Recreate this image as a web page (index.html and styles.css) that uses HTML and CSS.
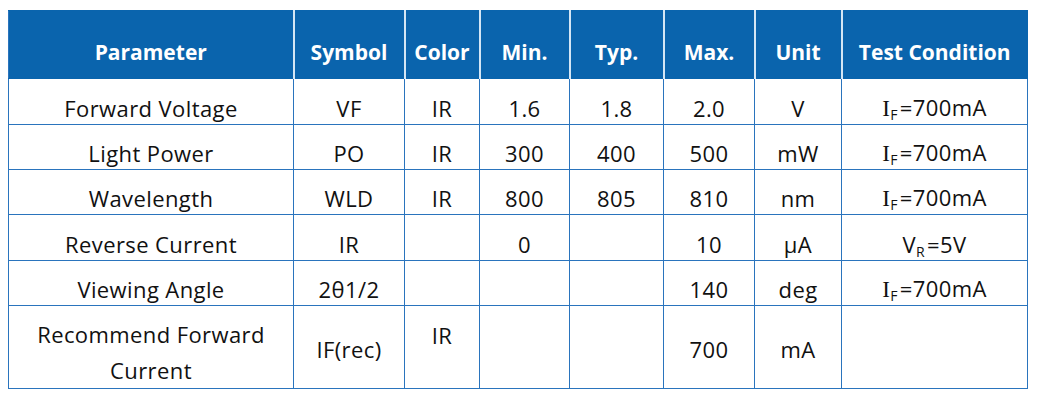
FILE: index.html
```html
<!DOCTYPE html>
<html>
<head>
<meta charset="utf-8">
<link rel="stylesheet" href="styles.css">
</head>
<body>
<table class="spec">
  <colgroup>
    <col class="c-param"><col class="c-sym"><col class="c-color"><col class="c-min"><col class="c-typ"><col class="c-max"><col class="c-unit"><col class="c-test">
  </colgroup>
  <thead>
    <tr class="head">
      <th>Parameter</th><th>Symbol</th><th>Color</th><th>Min.</th><th>Typ.</th><th>Max.</th><th>Unit</th><th>Test Condition</th>
    </tr>
  </thead>
  <tbody>
    <tr class="r1">
      <td>Forward Voltage</td><td>VF</td><td>IR</td><td>1.6</td><td>1.8</td><td>2.0</td><td>V</td><td><span class="si">I</span><sub>F</sub>=700mA</td>
    </tr>
    <tr class="r2">
      <td>Light Power</td><td>PO</td><td>IR</td><td>300</td><td>400</td><td>500</td><td>mW</td><td><span class="si">I</span><sub>F</sub>=700mA</td>
    </tr>
    <tr class="r3">
      <td>Wavelength</td><td>WLD</td><td>IR</td><td>800</td><td>805</td><td>810</td><td>nm</td><td><span class="si">I</span><sub>F</sub>=700mA</td>
    </tr>
    <tr class="r4">
      <td>Reverse Current</td><td>IR</td><td></td><td>0</td><td></td><td>10</td><td>μA</td><td>V<sub>R</sub>=5V</td>
    </tr>
    <tr class="r5">
      <td>Viewing Angle</td><td>2θ1/2</td><td></td><td></td><td></td><td>140</td><td>deg</td><td><span class="si">I</span><sub>F</sub>=700mA</td>
    </tr>
    <tr class="r6">
      <td class="two">Recommend Forward<br>Current</td><td>IF(rec)</td><td class="top">IR</td><td></td><td></td><td>700</td><td>mA</td><td></td>
    </tr>
  </tbody>
</table>
</body>
</html>
```
FILE: styles.css
```css
html, body {
  margin: 0;
  padding: 0;
  background: #ffffff;
}
body {
  padding: 10px 0 0 8px;
  font-family: "Open Sans", "Noto Sans", sans-serif;
  color: #111111;
}
.spec {
  border-collapse: collapse;
  table-layout: fixed;
  width: 1019px;
  font-size: 21px;
  line-height: 24px;
}
.c-param { width: 285px; }
.c-sym { width: 111px; }
.c-color { width: 75px; }
.c-min { width: 90px; }
.c-typ { width: 94px; }
.c-max { width: 91px; }
.c-unit { width: 87px; }
.c-test { width: 186px; }

.head th {
  height: 68px;
  box-sizing: border-box;
  background: #0a64ad;
  color: #ffffff;
  font-weight: 700;
  padding: 14px 0 0 0;
  vertical-align: middle;
  text-align: center;
  border: 1px solid #0a64ad;
  border-left: 2px solid #d4e6f5;
  white-space: nowrap;
}
.head th:first-child {
  border-left: 1px solid #2a74bd;
}
td {
  border: 1px solid #2a74bd;
  text-align: center;
  vertical-align: middle;
  padding: 12px 0 0 0;
  white-space: nowrap;
  font-size: 22px;
  letter-spacing: 0.4px;
}
.r1 td { height: 46px; }
.r2 td, .r3 td, .r5 td { height: 45px; }
.r4 td { height: 46px; }
.r1 td, .r2 td, .r3 td, .r4 td, .r5 td { box-sizing: border-box; }
.r6 td {
  height: 81px;
  box-sizing: border-box;
  padding-top: 3px;
}
.r6 td.two {
  line-height: 36px;
  vertical-align: top;
  padding-top: 10px;
  white-space: normal;
}
.r6 td.top {
  vertical-align: top;
  padding-top: 17px;
}
.si {
  font-family: "Liberation Serif", serif;
  font-size: 23px;
}
sub {
  font-size: 14px;
  line-height: 0;
  vertical-align: -4px;
  margin-right: 2px;
}
```
